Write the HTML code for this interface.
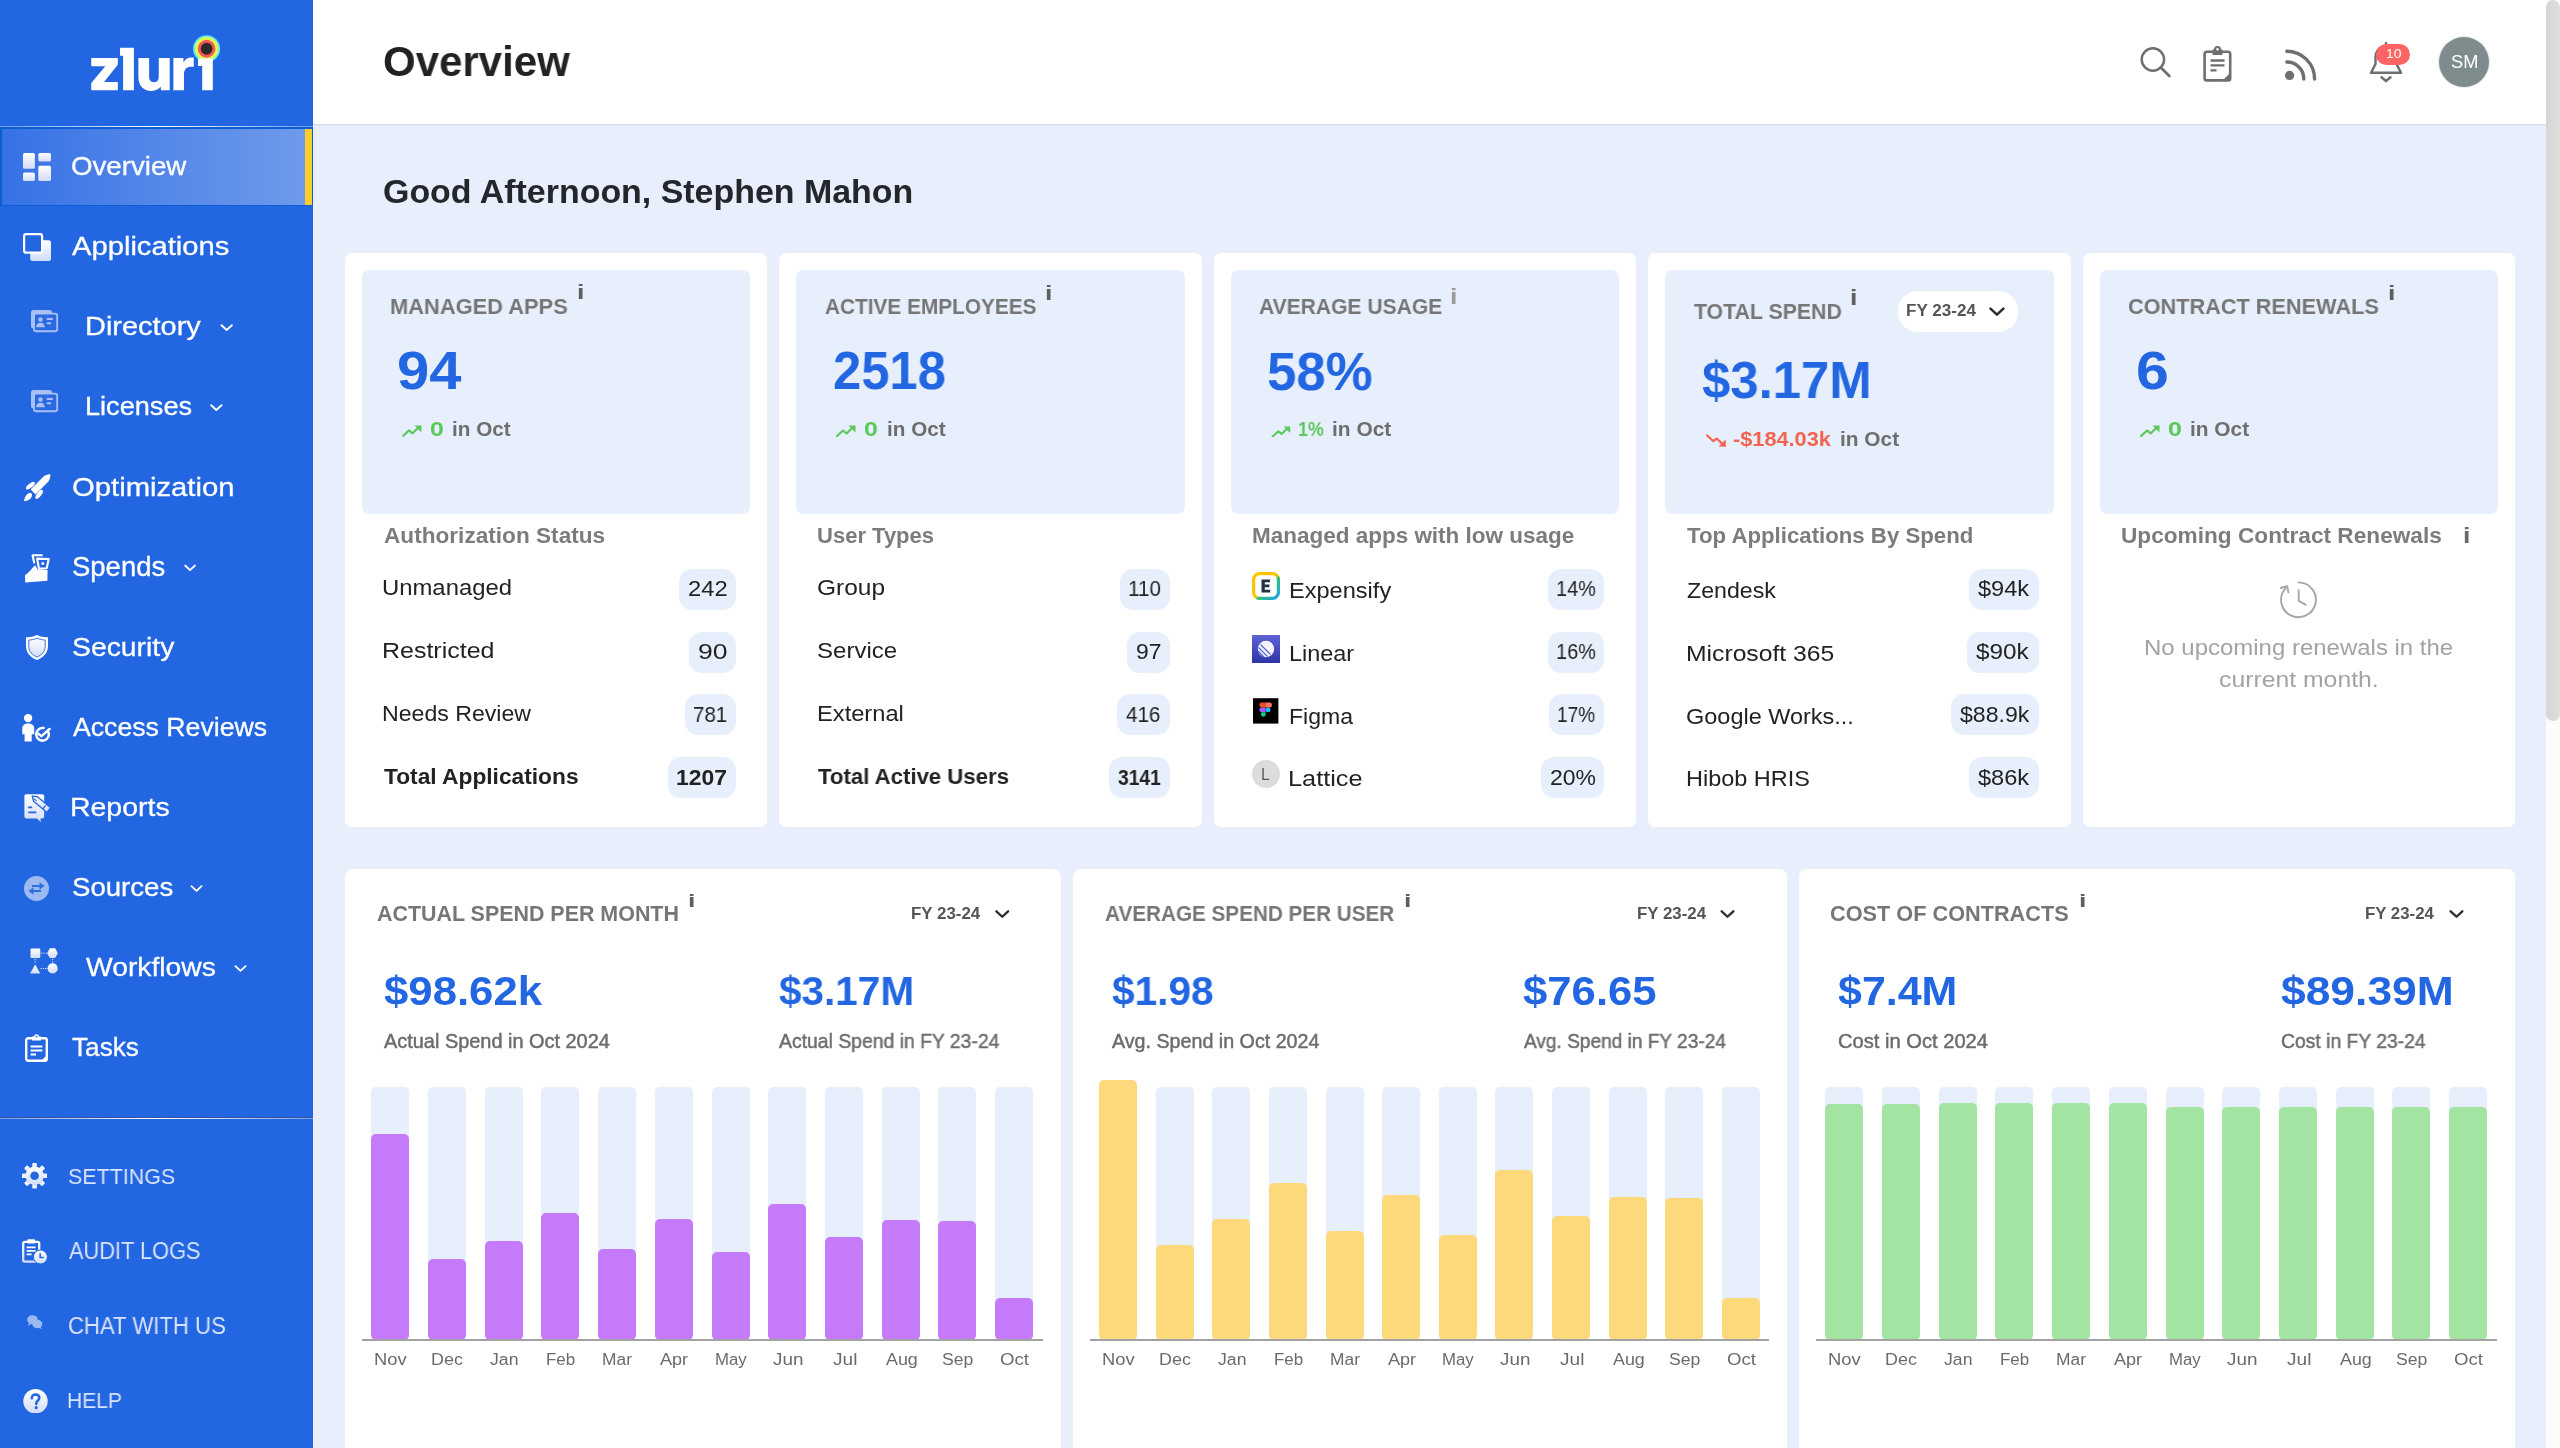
<!DOCTYPE html>
<html><head><meta charset="utf-8"><title>Overview</title>
<style>
*{box-sizing:border-box}
html,body{margin:0;padding:0}
body{width:2560px;height:1448px;overflow:hidden;position:relative;background:#E8EEFB;font-family:"Liberation Sans",sans-serif}
.t{position:absolute;white-space:nowrap;font-family:"Liberation Sans",sans-serif;will-change:transform}
.a{position:absolute}
</style></head><body>
<div class="a" style="left:0;top:0;width:313px;height:1448px;background:#2266E2"></div>
<div class="a" style="left:313px;top:0;width:2233px;height:124px;background:#fff"></div>
<div class="a" style="left:313px;top:124px;width:2233px;height:1px;background:#d9dde5"></div>
<div class="a" style="left:313px;top:125px;width:2233px;height:1px;background:#e0e6f3"></div>
<div class="a" style="left:2546px;top:0;width:14px;height:1448px;background:#fcfcfc"></div>
<div class="a" style="left:2546px;top:0px;width:14px;height:721px;background:linear-gradient(90deg,#d6d6d6,#dedede);border-radius:7px"></div>
<div class="a" style="left:0;top:126px;width:313px;height:1px;background:linear-gradient(90deg,#6f9bee,#ffffff 50%,#6f9bee)"></div>
<div class="a" style="left:0;top:1117px;width:313px;height:1px;background:#34539a"></div>
<div class="a" style="left:0;top:1118px;width:313px;height:1px;background:linear-gradient(90deg,#7aa2ee,#ffffff 50%,#7aa2ee)"></div>
<div class="a" style="left:0;top:127px;width:313px;height:79px;background:#0b5fd2"></div>
<div class="a" style="left:2px;top:129px;width:303px;height:76px;background:linear-gradient(90deg,#3672e6,#6f9aeb)"></div>
<div class="a" style="left:305px;top:129px;width:7px;height:76px;background:#fccc2a"></div>
<div class="a" style="left:345.0px;top:253px;width:422.0px;height:574px;background:#fff;border-radius:7px"></div>
<div class="a" style="left:362.0px;top:270px;width:388.0px;height:244px;background:#E8EFFC;border-radius:7px"></div>
<div class="a" style="left:779.0px;top:253px;width:422.6px;height:574px;background:#fff;border-radius:7px"></div>
<div class="a" style="left:796.0px;top:270px;width:388.6px;height:244px;background:#E8EFFC;border-radius:7px"></div>
<div class="a" style="left:1214.0px;top:253px;width:422.0px;height:574px;background:#fff;border-radius:7px"></div>
<div class="a" style="left:1231.0px;top:270px;width:388.0px;height:244px;background:#E8EFFC;border-radius:7px"></div>
<div class="a" style="left:1648.0px;top:253px;width:422.5px;height:574px;background:#fff;border-radius:7px"></div>
<div class="a" style="left:1665.0px;top:270px;width:388.5px;height:244px;background:#E8EFFC;border-radius:7px"></div>
<div class="a" style="left:2083.0px;top:253px;width:431.7px;height:574px;background:#fff;border-radius:7px"></div>
<div class="a" style="left:2100.0px;top:270px;width:397.7px;height:244px;background:#E8EFFC;border-radius:7px"></div>
<div class="a" style="left:345.0px;top:869px;width:716.0px;height:700px;background:#fff;border-radius:8px"></div>
<div class="a" style="left:1073.0px;top:869px;width:714.0px;height:700px;background:#fff;border-radius:8px"></div>
<div class="a" style="left:1799.0px;top:869px;width:715.7px;height:700px;background:#fff;border-radius:8px"></div>
<svg class="a" style="left:401.9px;top:425.0px" width="20.1" height="11.8" viewBox="0 0 20 12"><path d="M1 11 L7 5.5 L10.5 8.5 L16.5 2.5" fill="none" stroke="#5bc85b" stroke-width="2.2" stroke-linecap="round" stroke-linejoin="round"/><path d="M12.5 0.6 L19.6 0.4 L19.4 7.5 Z" fill="#5bc85b"/></svg>
<svg class="a" style="left:836.4px;top:424.7px" width="20.1" height="12.0" viewBox="0 0 20 12"><path d="M1 11 L7 5.5 L10.5 8.5 L16.5 2.5" fill="none" stroke="#5bc85b" stroke-width="2.2" stroke-linecap="round" stroke-linejoin="round"/><path d="M12.5 0.6 L19.6 0.4 L19.4 7.5 Z" fill="#5bc85b"/></svg>
<svg class="a" style="left:1270.6px;top:425.5px" width="20.4" height="11.4" viewBox="0 0 20 12"><path d="M1 11 L7 5.5 L10.5 8.5 L16.5 2.5" fill="none" stroke="#5bc85b" stroke-width="2.2" stroke-linecap="round" stroke-linejoin="round"/><path d="M12.5 0.6 L19.6 0.4 L19.4 7.5 Z" fill="#5bc85b"/></svg>
<svg class="a" style="left:2139.8px;top:425.0px" width="20.2" height="11.9" viewBox="0 0 20 12"><path d="M1 11 L7 5.5 L10.5 8.5 L16.5 2.5" fill="none" stroke="#5bc85b" stroke-width="2.2" stroke-linecap="round" stroke-linejoin="round"/><path d="M12.5 0.6 L19.6 0.4 L19.4 7.5 Z" fill="#5bc85b"/></svg>
<svg class="a" style="left:1705.6px;top:433.7px" width="20.4" height="13.1" viewBox="0 0 20 13"><path d="M1 1.5 L7 7 L10.5 4.5 L16.5 10" fill="none" stroke="#f2644f" stroke-width="2.2" stroke-linecap="round" stroke-linejoin="round"/><path d="M12.5 12.4 L19.6 12.6 L19.4 5.5 Z" fill="#f2644f"/></svg>
<div class="a" style="left:1898px;top:291px;width:120.3px;height:40.7px;background:#fff;border-radius:20px"></div>
<svg class="a" style="left:1989.4px;top:306.9px;overflow:visible" width="15.9" height="9.3" viewBox="0 0 16 9"><path d="M1.5 1.5 L8 7.5 L14.5 1.5" fill="none" stroke="#2d2d2d" stroke-width="2.6" stroke-linecap="round" stroke-linejoin="round"/></svg>
<svg class="a" style="left:994.8px;top:909.7px;overflow:visible" width="14.5" height="8.1" viewBox="0 0 16 9"><path d="M1.5 1.5 L8 7.5 L14.5 1.5" fill="none" stroke="#2d2d2d" stroke-width="2.6" stroke-linecap="round" stroke-linejoin="round"/></svg>
<svg class="a" style="left:1719.9px;top:909.7px;overflow:visible" width="15.0" height="8.1" viewBox="0 0 16 9"><path d="M1.5 1.5 L8 7.5 L14.5 1.5" fill="none" stroke="#2d2d2d" stroke-width="2.6" stroke-linecap="round" stroke-linejoin="round"/></svg>
<svg class="a" style="left:2448.5px;top:909.7px;overflow:visible" width="15.0" height="8.1" viewBox="0 0 16 9"><path d="M1.5 1.5 L8 7.5 L14.5 1.5" fill="none" stroke="#2d2d2d" stroke-width="2.6" stroke-linecap="round" stroke-linejoin="round"/></svg>
<div class="a" style="left:679.4px;top:568.8px;width:56.3px;height:41px;background:#E8EFFC;border-radius:13px"></div>
<div class="a" style="left:689.2px;top:631.6px;width:46.5px;height:41px;background:#E8EFFC;border-radius:13px"></div>
<div class="a" style="left:684.5px;top:694.4px;width:51.2px;height:41px;background:#E8EFFC;border-radius:13px"></div>
<div class="a" style="left:668.0px;top:757.2px;width:67.7px;height:41px;background:#E8EFFC;border-radius:13px"></div>
<div class="a" style="left:1119.9px;top:568.8px;width:49.7px;height:41px;background:#E8EFFC;border-radius:13px"></div>
<div class="a" style="left:1127.1px;top:631.6px;width:42.5px;height:41px;background:#E8EFFC;border-radius:13px"></div>
<div class="a" style="left:1117.4px;top:694.4px;width:52.2px;height:41px;background:#E8EFFC;border-radius:13px"></div>
<div class="a" style="left:1108.7px;top:757.2px;width:60.9px;height:41px;background:#E8EFFC;border-radius:13px"></div>
<div class="a" style="left:1547.5px;top:568.8px;width:56.9px;height:41px;background:#E8EFFC;border-radius:13px"></div>
<div class="a" style="left:1547.5px;top:631.6px;width:56.9px;height:41px;background:#E8EFFC;border-radius:13px"></div>
<div class="a" style="left:1549.2px;top:694.4px;width:55.2px;height:41px;background:#E8EFFC;border-radius:13px"></div>
<div class="a" style="left:1541.2px;top:757.2px;width:63.2px;height:41px;background:#E8EFFC;border-radius:13px"></div>
<div class="a" style="left:1968.7px;top:568.8px;width:70.1px;height:41px;background:#E8EFFC;border-radius:13px"></div>
<div class="a" style="left:1967.1px;top:631.6px;width:71.7px;height:41px;background:#E8EFFC;border-radius:13px"></div>
<div class="a" style="left:1950.5px;top:694.4px;width:88.3px;height:41px;background:#E8EFFC;border-radius:13px"></div>
<div class="a" style="left:1968.7px;top:757.2px;width:70.1px;height:41px;background:#E8EFFC;border-radius:13px"></div>
<svg class="a" style="left:1252.2px;top:572px" width="28" height="28" viewBox="0 0 28 28"><defs><linearGradient id="ex1" x1="0" y1="0" x2="1" y2="1"><stop offset="0" stop-color="#ffc400"/><stop offset="0.55" stop-color="#ffc400"/><stop offset="0.56" stop-color="#36c46d"/><stop offset="1" stop-color="#1aa3ea"/></linearGradient></defs><rect x="1.6" y="1.6" width="24.8" height="24.8" rx="6" fill="#fff" stroke="url(#ex1)" stroke-width="3.2"/><path d="M9.5 7.5 H18 V10.3 H12.8 V12.6 H17.4 V15.2 H12.8 V17.7 H18.2 V20.5 H9.5 Z" fill="#1f3440"/></svg>
<svg class="a" style="left:1252.2px;top:635px" width="28" height="28" viewBox="0 0 28 28"><defs><linearGradient id="ln1" x1="0" y1="0" x2="0" y2="1"><stop offset="0" stop-color="#5f63d4"/><stop offset="1" stop-color="#2d35a8"/></linearGradient></defs><rect x="0" y="0" width="28" height="28" fill="url(#ln1)"/><circle cx="14" cy="14" r="8.2" fill="#f4f4ff"/><path d="M6.5 12.5 L15.5 21.5 M6 16 L12 22 M8.5 9.5 L18.5 19.5" stroke="#5a5fcf" stroke-width="1.1"/></svg>
<svg class="a" style="left:1253.3px;top:698.4px" width="25.4" height="25.8" viewBox="0 0 26 26"><rect width="26" height="26" fill="#000"/><path d="M9 4.5 h4 v5 h-4 a2.5 2.5 0 0 1 0 -5z" fill="#f24e1e"/><path d="M13 4.5 h4 a2.5 2.5 0 0 1 0 5 h-4z" fill="#ff7262"/><path d="M9 9.5 h4 v5 h-4 a2.5 2.5 0 0 1 0 -5z" fill="#a259ff"/><circle cx="15.5" cy="12" r="2.5" fill="#1abcfe"/><path d="M9 14.5 h4 v2.5 a2.5 2.5 0 1 1 -4 -2.5z" fill="#0acf83"/></svg>
<div class="a" style="left:1252.2px;top:760px;width:28px;height:28px;border-radius:50%;background:#dcdcdc"></div>
<svg class="a" style="left:2278px;top:579px" width="42" height="42" viewBox="0 0 42 42"><path d="M20.5 3.4 A17.4 17.4 0 1 1 7.6 9.1" fill="none" stroke="#a6a6a6" stroke-width="1.9" stroke-linecap="round"/><path d="M2.9 9 L9.1 7.2 L10.4 13.4" fill="none" stroke="#a6a6a6" stroke-width="1.9" stroke-linecap="round" stroke-linejoin="round"/><path d="M20.7 11.3 V21.9 L27.8 25.8" fill="none" stroke="#a6a6a6" stroke-width="1.9" stroke-linecap="round" stroke-linejoin="round"/></svg>
<div class="a" style="left:371.2px;top:1087.4px;width:38px;height:252.6px;background:#E8EFFC;border-radius:5px"></div>
<div class="a" style="left:371.2px;top:1133.6px;width:38px;height:206.4px;background:#c47af9;border-radius:5px"></div>
<div class="a" style="left:427.9px;top:1087.4px;width:38px;height:252.6px;background:#E8EFFC;border-radius:5px"></div>
<div class="a" style="left:427.9px;top:1259.4px;width:38px;height:80.6px;background:#c47af9;border-radius:5px"></div>
<div class="a" style="left:484.6px;top:1087.4px;width:38px;height:252.6px;background:#E8EFFC;border-radius:5px"></div>
<div class="a" style="left:484.6px;top:1240.6px;width:38px;height:99.4px;background:#c47af9;border-radius:5px"></div>
<div class="a" style="left:541.4px;top:1087.4px;width:38px;height:252.6px;background:#E8EFFC;border-radius:5px"></div>
<div class="a" style="left:541.4px;top:1212.5px;width:38px;height:127.5px;background:#c47af9;border-radius:5px"></div>
<div class="a" style="left:598.1px;top:1087.4px;width:38px;height:252.6px;background:#E8EFFC;border-radius:5px"></div>
<div class="a" style="left:598.1px;top:1249.2px;width:38px;height:90.8px;background:#c47af9;border-radius:5px"></div>
<div class="a" style="left:654.8px;top:1087.4px;width:38px;height:252.6px;background:#E8EFFC;border-radius:5px"></div>
<div class="a" style="left:654.8px;top:1218.9px;width:38px;height:121.1px;background:#c47af9;border-radius:5px"></div>
<div class="a" style="left:711.5px;top:1087.4px;width:38px;height:252.6px;background:#E8EFFC;border-radius:5px"></div>
<div class="a" style="left:711.5px;top:1251.5px;width:38px;height:88.5px;background:#c47af9;border-radius:5px"></div>
<div class="a" style="left:768.2px;top:1087.4px;width:38px;height:252.6px;background:#E8EFFC;border-radius:5px"></div>
<div class="a" style="left:768.2px;top:1204.4px;width:38px;height:135.6px;background:#c47af9;border-radius:5px"></div>
<div class="a" style="left:824.9px;top:1087.4px;width:38px;height:252.6px;background:#E8EFFC;border-radius:5px"></div>
<div class="a" style="left:824.9px;top:1237.1px;width:38px;height:102.9px;background:#c47af9;border-radius:5px"></div>
<div class="a" style="left:881.7px;top:1087.4px;width:38px;height:252.6px;background:#E8EFFC;border-radius:5px"></div>
<div class="a" style="left:881.7px;top:1220.3px;width:38px;height:119.7px;background:#c47af9;border-radius:5px"></div>
<div class="a" style="left:938.4px;top:1087.4px;width:38px;height:252.6px;background:#E8EFFC;border-radius:5px"></div>
<div class="a" style="left:938.4px;top:1220.9px;width:38px;height:119.1px;background:#c47af9;border-radius:5px"></div>
<div class="a" style="left:995.1px;top:1087.4px;width:38px;height:252.6px;background:#E8EFFC;border-radius:5px"></div>
<div class="a" style="left:995.1px;top:1298.4px;width:38px;height:41.6px;background:#c47af9;border-radius:5px"></div>
<div class="a" style="left:362.3px;top:1339px;width:680.8px;height:2px;background:#a2a2a2"></div>
<div class="a" style="left:1099.0px;top:1087.4px;width:38px;height:252.6px;background:#E8EFFC;border-radius:5px"></div>
<div class="a" style="left:1099.0px;top:1079.8px;width:38px;height:260.2px;background:#fcda7b;border-radius:5px"></div>
<div class="a" style="left:1155.6px;top:1087.4px;width:38px;height:252.6px;background:#E8EFFC;border-radius:5px"></div>
<div class="a" style="left:1155.6px;top:1244.9px;width:38px;height:95.1px;background:#fcda7b;border-radius:5px"></div>
<div class="a" style="left:1212.3px;top:1087.4px;width:38px;height:252.6px;background:#E8EFFC;border-radius:5px"></div>
<div class="a" style="left:1212.3px;top:1218.5px;width:38px;height:121.5px;background:#fcda7b;border-radius:5px"></div>
<div class="a" style="left:1268.9px;top:1087.4px;width:38px;height:252.6px;background:#E8EFFC;border-radius:5px"></div>
<div class="a" style="left:1268.9px;top:1183.0px;width:38px;height:157.0px;background:#fcda7b;border-radius:5px"></div>
<div class="a" style="left:1325.5px;top:1087.4px;width:38px;height:252.6px;background:#E8EFFC;border-radius:5px"></div>
<div class="a" style="left:1325.5px;top:1230.9px;width:38px;height:109.1px;background:#fcda7b;border-radius:5px"></div>
<div class="a" style="left:1382.1px;top:1087.4px;width:38px;height:252.6px;background:#E8EFFC;border-radius:5px"></div>
<div class="a" style="left:1382.1px;top:1195.1px;width:38px;height:144.9px;background:#fcda7b;border-radius:5px"></div>
<div class="a" style="left:1438.8px;top:1087.4px;width:38px;height:252.6px;background:#E8EFFC;border-radius:5px"></div>
<div class="a" style="left:1438.8px;top:1235.4px;width:38px;height:104.6px;background:#fcda7b;border-radius:5px"></div>
<div class="a" style="left:1495.4px;top:1087.4px;width:38px;height:252.6px;background:#E8EFFC;border-radius:5px"></div>
<div class="a" style="left:1495.4px;top:1170.4px;width:38px;height:169.6px;background:#fcda7b;border-radius:5px"></div>
<div class="a" style="left:1552.0px;top:1087.4px;width:38px;height:252.6px;background:#E8EFFC;border-radius:5px"></div>
<div class="a" style="left:1552.0px;top:1215.7px;width:38px;height:124.3px;background:#fcda7b;border-radius:5px"></div>
<div class="a" style="left:1608.6px;top:1087.4px;width:38px;height:252.6px;background:#E8EFFC;border-radius:5px"></div>
<div class="a" style="left:1608.6px;top:1197.1px;width:38px;height:142.9px;background:#fcda7b;border-radius:5px"></div>
<div class="a" style="left:1665.3px;top:1087.4px;width:38px;height:252.6px;background:#E8EFFC;border-radius:5px"></div>
<div class="a" style="left:1665.3px;top:1198.0px;width:38px;height:142.0px;background:#fcda7b;border-radius:5px"></div>
<div class="a" style="left:1721.9px;top:1087.4px;width:38px;height:252.6px;background:#E8EFFC;border-radius:5px"></div>
<div class="a" style="left:1721.9px;top:1298.4px;width:38px;height:41.6px;background:#fcda7b;border-radius:5px"></div>
<div class="a" style="left:1089.7px;top:1339px;width:679.7px;height:2px;background:#a2a2a2"></div>
<div class="a" style="left:1825.3px;top:1087.4px;width:38px;height:252.6px;background:#E8EFFC;border-radius:5px"></div>
<div class="a" style="left:1825.3px;top:1104.3px;width:38px;height:235.7px;background:#a3e4a3;border-radius:5px"></div>
<div class="a" style="left:1882.0px;top:1087.4px;width:38px;height:252.6px;background:#E8EFFC;border-radius:5px"></div>
<div class="a" style="left:1882.0px;top:1104.3px;width:38px;height:235.7px;background:#a3e4a3;border-radius:5px"></div>
<div class="a" style="left:1938.7px;top:1087.4px;width:38px;height:252.6px;background:#E8EFFC;border-radius:5px"></div>
<div class="a" style="left:1938.7px;top:1103.2px;width:38px;height:236.8px;background:#a3e4a3;border-radius:5px"></div>
<div class="a" style="left:1995.4px;top:1087.4px;width:38px;height:252.6px;background:#E8EFFC;border-radius:5px"></div>
<div class="a" style="left:1995.4px;top:1103.2px;width:38px;height:236.8px;background:#a3e4a3;border-radius:5px"></div>
<div class="a" style="left:2052.1px;top:1087.4px;width:38px;height:252.6px;background:#E8EFFC;border-radius:5px"></div>
<div class="a" style="left:2052.1px;top:1103.2px;width:38px;height:236.8px;background:#a3e4a3;border-radius:5px"></div>
<div class="a" style="left:2108.8px;top:1087.4px;width:38px;height:252.6px;background:#E8EFFC;border-radius:5px"></div>
<div class="a" style="left:2108.8px;top:1103.2px;width:38px;height:236.8px;background:#a3e4a3;border-radius:5px"></div>
<div class="a" style="left:2165.5px;top:1087.4px;width:38px;height:252.6px;background:#E8EFFC;border-radius:5px"></div>
<div class="a" style="left:2165.5px;top:1106.6px;width:38px;height:233.4px;background:#a3e4a3;border-radius:5px"></div>
<div class="a" style="left:2222.2px;top:1087.4px;width:38px;height:252.6px;background:#E8EFFC;border-radius:5px"></div>
<div class="a" style="left:2222.2px;top:1106.6px;width:38px;height:233.4px;background:#a3e4a3;border-radius:5px"></div>
<div class="a" style="left:2278.9px;top:1087.4px;width:38px;height:252.6px;background:#E8EFFC;border-radius:5px"></div>
<div class="a" style="left:2278.9px;top:1106.6px;width:38px;height:233.4px;background:#a3e4a3;border-radius:5px"></div>
<div class="a" style="left:2335.6px;top:1087.4px;width:38px;height:252.6px;background:#E8EFFC;border-radius:5px"></div>
<div class="a" style="left:2335.6px;top:1106.8px;width:38px;height:233.2px;background:#a3e4a3;border-radius:5px"></div>
<div class="a" style="left:2392.3px;top:1087.4px;width:38px;height:252.6px;background:#E8EFFC;border-radius:5px"></div>
<div class="a" style="left:2392.3px;top:1106.8px;width:38px;height:233.2px;background:#a3e4a3;border-radius:5px"></div>
<div class="a" style="left:2449.0px;top:1087.4px;width:38px;height:252.6px;background:#E8EFFC;border-radius:5px"></div>
<div class="a" style="left:2449.0px;top:1106.8px;width:38px;height:233.2px;background:#a3e4a3;border-radius:5px"></div>
<div class="a" style="left:1816.3px;top:1339px;width:680.6px;height:2px;background:#a2a2a2"></div>
<svg class="a" style="left:0;top:0" width="313" height="124" viewBox="0 0 313 124"><circle cx="206.6" cy="48.75" r="13.6" fill="#5fe3ff"/><circle cx="206.6" cy="48.75" r="11.9" fill="#d6ff4f"/><circle cx="206.6" cy="48.75" r="8.9" fill="#ff5757"/><circle cx="206.6" cy="48.75" r="5.9" fill="#2d2a2a"/><g fill="#fff"><path d="M91.25 58.1 H117.8 V64.7 L104 81.9 H117.8 V90.3 H91.25 V83.1 L105.3 66.2 H91.25 Z"/><path d="M120 47.8 H133.9 V90.3 H123.1 V55.8 H120 Z"/><path d="M138.4 58.1 H149.1 V76.5 C149.1 80.5 150.8 82.2 154 82.2 C157.2 82.2 158.75 80.5 158.75 76.5 V58.1 H169.7 V90.3 H161 L160.7 86.8 C158.6 89.6 155.4 90.9 151.6 90.9 C143.3 90.9 138.4 85.5 138.4 77 Z"/><path d="M173.4 58.1 H183.3 L183.6 62.6 C185 59.3 187.8 57.6 191.6 57.6 H193.75 V66.8 H191.3 C186.6 66.8 184 69.2 184 74.5 V90.3 H173.4 Z"/><path d="M198 58.4 H212.8 V90.3 H202.2 V66 H198 Z"/></g></svg>
<svg class="a" style="left:22.8px;top:153.0px;opacity:1.00" width="28.0" height="28.0" viewBox="0 0 28 28"><defs><linearGradient id="wg" x1="0" y1="0" x2="0" y2="1"><stop offset="0" stop-color="#ffffff"/><stop offset="1" stop-color="#d3dcf8"/></linearGradient></defs><g fill="url(#wg)"><rect x="0" y="0" width="11.9" height="15.8" rx="1.6"/><rect x="15.3" y="0" width="12.7" height="8.6" rx="1.6"/><rect x="0" y="19.5" width="11.9" height="8.5" rx="1.6"/><rect x="15.3" y="12.7" width="12.7" height="15.3" rx="1.6"/></g></svg>
<svg class="a" style="left:22.8px;top:233.0px;opacity:1.00" width="28.0" height="28.0" viewBox="0 0 28 28"><defs><linearGradient id="wg" x1="0" y1="0" x2="0" y2="1"><stop offset="0" stop-color="#ffffff"/><stop offset="1" stop-color="#d3dcf8"/></linearGradient></defs><rect x="7.2" y="7.3" width="20.8" height="20.7" rx="2.5" fill="url(#wg)"/><rect x="1.1" y="1.1" width="18" height="18.6" rx="2" fill="#2266E2" stroke="#fff" stroke-width="2.2"/></svg>
<svg class="a" style="left:29.5px;top:309.0px;opacity:1.00" width="29.0" height="24.0" viewBox="0 0 29 24"><defs><linearGradient id="wg" x1="0" y1="0" x2="0" y2="1"><stop offset="0" stop-color="#ffffff"/><stop offset="1" stop-color="#d3dcf8"/></linearGradient></defs><rect x="1" y="1" width="21" height="18.5" rx="2.5" fill="#a8c0f5"/><rect x="4" y="4.6" width="23.2" height="17.6" rx="2.2" fill="#2a6ae2" stroke="#a8c0f5" stroke-width="1.9"/><circle cx="10.5" cy="10.5" r="2.3" fill="#a8c0f5"/><path d="M6.2 18.3 C6.6 14.8 8.2 13.8 10.5 13.8 C12.8 13.8 14.4 14.8 14.8 18.3 Z" fill="#a8c0f5"/><rect x="16.5" y="9.1" width="6.5" height="1.9" rx="0.9" fill="#a8c0f5"/><rect x="16.5" y="13.3" width="4.8" height="1.9" rx="0.9" fill="#a8c0f5"/></svg>
<svg class="a" style="left:29.5px;top:389.3px;opacity:1.00" width="29.0" height="24.0" viewBox="0 0 29 24"><defs><linearGradient id="wg" x1="0" y1="0" x2="0" y2="1"><stop offset="0" stop-color="#ffffff"/><stop offset="1" stop-color="#d3dcf8"/></linearGradient></defs><rect x="1" y="1" width="21" height="18.5" rx="2.5" fill="#a8c0f5"/><rect x="4" y="4.6" width="23.2" height="17.6" rx="2.2" fill="#2a6ae2" stroke="#a8c0f5" stroke-width="1.9"/><circle cx="10.5" cy="10.5" r="2.3" fill="#a8c0f5"/><path d="M6.2 18.3 C6.6 14.8 8.2 13.8 10.5 13.8 C12.8 13.8 14.4 14.8 14.8 18.3 Z" fill="#a8c0f5"/><rect x="16.5" y="9.1" width="6.5" height="1.9" rx="0.9" fill="#a8c0f5"/><rect x="16.5" y="13.3" width="4.8" height="1.9" rx="0.9" fill="#a8c0f5"/></svg>
<svg class="a" style="left:22.5px;top:473.5px;opacity:1.00" width="28.0" height="28.0" viewBox="0 0 28 28"><defs><linearGradient id="wg" x1="0" y1="0" x2="0" y2="1"><stop offset="0" stop-color="#ffffff"/><stop offset="1" stop-color="#d3dcf8"/></linearGradient></defs><g fill="#fff"><path d="M7.6 15.4 L20.8 2.2 C23.5 0.6 26.2 0.2 27.4 0.4 C27.6 1.8 27.2 4.4 25.6 7.2 L12.6 20.4 Z"/><ellipse cx="7.4" cy="11.6" rx="5.4" ry="2.1" transform="rotate(-38 7.4 11.6)"/><ellipse cx="16.2" cy="20.4" rx="5.4" ry="2.1" transform="rotate(-52 16.2 20.4)"/><path d="M8.6 19.4 C6 18.2 2.2 20 1 27.2 C7.8 26.4 9.8 22.4 8.6 19.4 Z"/></g></svg>
<svg class="a" style="left:23.5px;top:553.5px;opacity:1.00" width="26.0" height="29.0" viewBox="0 0 26 29"><defs><linearGradient id="wg" x1="0" y1="0" x2="0" y2="1"><stop offset="0" stop-color="#ffffff"/><stop offset="1" stop-color="#d3dcf8"/></linearGradient></defs><g fill="none" stroke="#fff" stroke-width="2.1" stroke-linejoin="round"><path d="M18.7 1.3 H8.6 L10.3 9.4"/><path d="M13.1 4.6 L24.7 5 L22.7 14.2 L15 14.6 Z"/></g><circle cx="18.8" cy="9.6" r="1.5" fill="#fff"/><path d="M1 21 C3.6 19.6 6.2 17.2 8.6 13.8 L11.2 11.2 L13.6 15.6 L23.6 16 L23.4 26.8 L1.2 28.4 Z" fill="#fff"/></svg>
<svg class="a" style="left:24.5px;top:634.0px;opacity:1.00" width="24.0" height="27.0" viewBox="0 0 24 27"><defs><linearGradient id="wg" x1="0" y1="0" x2="0" y2="1"><stop offset="0" stop-color="#ffffff"/><stop offset="1" stop-color="#d3dcf8"/></linearGradient></defs><path d="M12 1 C16 2.8 19.5 3.4 23 3.2 V12 C23 19 18.5 23.5 12 26 C5.5 23.5 1 19 1 12 V3.2 C4.5 3.4 8 2.8 12 1 Z" fill="#fff"/><path d="M12 4.2 C15 5.5 17.6 6 20.2 6 V12.3 C20.2 17.5 17 21 12 23 C7 21 3.8 17.5 3.8 12.3 V6 C6.4 6 9 5.5 12 4.2 Z" fill="url(#wg)" stroke="#2266E2" stroke-width="0.9"/></svg>
<svg class="a" style="left:22.4px;top:714.3px;opacity:1.00" width="29.0" height="28.0" viewBox="0 0 29 28"><defs><linearGradient id="wg" x1="0" y1="0" x2="0" y2="1"><stop offset="0" stop-color="#ffffff"/><stop offset="1" stop-color="#d3dcf8"/></linearGradient></defs><g fill="#fff"><circle cx="6.1" cy="4.1" r="4.2"/><path d="M0.3 14.2 C0.3 11.2 2.6 9.4 6.2 9.4 C9.8 9.4 12.2 11.2 12.2 14.2 V20.3 H9.7 V27.5 H2.6 V20.3 H0.3 Z"/></g><path d="M25.9 17.1 A6.3 6.3 0 1 1 21.6 14.1" fill="none" stroke="#fff" stroke-width="2.5" stroke-linecap="round"/><path d="M16 19.4 L19.5 22.2 L27.6 14.9" fill="none" stroke="#fff" stroke-width="2.4" stroke-linecap="round" stroke-linejoin="round"/></svg>
<svg class="a" style="left:24.0px;top:793.5px;opacity:1.00" width="27.0" height="29.0" viewBox="0 0 27 29"><defs><linearGradient id="wg" x1="0" y1="0" x2="0" y2="1"><stop offset="0" stop-color="#ffffff"/><stop offset="1" stop-color="#d3dcf8"/></linearGradient></defs><path d="M2.4 0.3 H18.2 C19.4 0.3 20.2 1.1 20.2 2.3 V22.6 C20.2 23.8 19.4 24.6 18.2 24.6 H16.4 L17 28.2 L13 24.6 H2.4 C1.2 24.6 0.4 23.8 0.4 22.6 V2.3 C0.4 1.1 1.2 0.3 2.4 0.3 Z" fill="url(#wg)"/><path d="M4.2 13.3 H8.2 M4.2 18.3 H12.4" stroke="#2266E2" stroke-width="1.7"/><path d="M8.2 2.2 L13.4 2.7 L26.6 13.7 L22.8 18.3 L9.6 7.3 Z" fill="url(#wg)" stroke="#2266E2" stroke-width="1.3" stroke-linejoin="round"/><path d="M9.8 4.6 L12.6 6.9" stroke="#2266E2" stroke-width="1.1"/><path d="M21.6 11.4 L18.8 15" stroke="#2266E2" stroke-width="1.3"/></svg>
<svg class="a" style="left:24.0px;top:876.0px;opacity:1.00" width="25.0" height="25.0" viewBox="0 0 25 25"><defs><linearGradient id="wg" x1="0" y1="0" x2="0" y2="1"><stop offset="0" stop-color="#ffffff"/><stop offset="1" stop-color="#d3dcf8"/></linearGradient></defs><circle cx="12.5" cy="12.5" r="12.5" fill="#fff" opacity="0.55"/><g fill="#2f6fe3"><path d="M8 9 H15.5 V6.3 L20.5 10 L15.5 13.7 V11 H8 Z"/><path d="M17 14 H9.5 V11.3 L4.5 15 L9.5 18.7 V16 H17 Z"/></g></svg>
<svg class="a" style="left:29.7px;top:948.0px;opacity:1.00" width="28.0" height="26.0" viewBox="0 0 28 26"><defs><linearGradient id="wg" x1="0" y1="0" x2="0" y2="1"><stop offset="0" stop-color="#ffffff"/><stop offset="1" stop-color="#d3dcf8"/></linearGradient></defs><g fill="url(#wg)"><rect x="0.5" y="0.5" width="9.8" height="9.6" rx="1"/><path d="M19.8 0.3 H25.2 L27.8 5.2 L25.2 10.1 H19.8 L17.2 5.2 Z"/><path d="M5.2 16.4 L10.3 25.4 H0 Z"/><circle cx="22.6" cy="20.4" r="5.1"/></g><g stroke="#e8eefc" stroke-width="1" stroke-dasharray="1.2 1.2"><path d="M11.2 5.2 H17"/><path d="M10.5 20.5 H17"/><path d="M5.2 11 V15.5"/><path d="M22.6 11 V15"/></g></svg>
<svg class="a" style="left:25.2px;top:1034.4px;opacity:1.00" width="23.0" height="28.0" viewBox="0 0 23 28"><defs><linearGradient id="wg" x1="0" y1="0" x2="0" y2="1"><stop offset="0" stop-color="#ffffff"/><stop offset="1" stop-color="#d3dcf8"/></linearGradient></defs><rect x="1.2" y="4.2" width="20.6" height="22.6" rx="2" fill="none" stroke="#fff" stroke-width="2.4"/><path d="M7 2.5 H16 V6.5 H7 Z" fill="#fff"/><circle cx="11.5" cy="2.6" r="2.4" fill="#fff"/><circle cx="11.5" cy="2.6" r="0.9" fill="#2266E2"/><path d="M5.6 12.5 H17.4 M5.6 16.5 H17.4 M5.6 20.5 H11" stroke="#fff" stroke-width="2"/><path d="M16 27 L22 21 V27 Z" fill="#fff"/></svg>
<svg class="a" style="left:22.3px;top:1163.2px;opacity:1.00" width="25.2" height="25.6" viewBox="0 0 25.2 25.6"><defs><linearGradient id="wg" x1="0" y1="0" x2="0" y2="1"><stop offset="0" stop-color="#ffffff"/><stop offset="1" stop-color="#d3dcf8"/></linearGradient></defs><g fill="url(#wg)"><rect x="10.3" y="0" width="4.6" height="6" rx="1.2" transform="rotate(0 12.6 12.8)"/><rect x="10.3" y="0" width="4.6" height="6" rx="1.2" transform="rotate(45 12.6 12.8)"/><rect x="10.3" y="0" width="4.6" height="6" rx="1.2" transform="rotate(90 12.6 12.8)"/><rect x="10.3" y="0" width="4.6" height="6" rx="1.2" transform="rotate(135 12.6 12.8)"/><rect x="10.3" y="0" width="4.6" height="6" rx="1.2" transform="rotate(180 12.6 12.8)"/><rect x="10.3" y="0" width="4.6" height="6" rx="1.2" transform="rotate(225 12.6 12.8)"/><rect x="10.3" y="0" width="4.6" height="6" rx="1.2" transform="rotate(270 12.6 12.8)"/><rect x="10.3" y="0" width="4.6" height="6" rx="1.2" transform="rotate(315 12.6 12.8)"/><circle cx="12.6" cy="12.8" r="9.2"/></g><circle cx="12.6" cy="12.8" r="4.3" fill="#2266E2"/></svg>
<svg class="a" style="left:22.3px;top:1238.8px;opacity:1.00" width="25.5" height="25.2" viewBox="0 0 25.5 25.2"><defs><linearGradient id="wg" x1="0" y1="0" x2="0" y2="1"><stop offset="0" stop-color="#ffffff"/><stop offset="1" stop-color="#d3dcf8"/></linearGradient></defs><rect x="1.2" y="2.8" width="16" height="19.8" rx="1.6" fill="none" stroke="url(#wg)" stroke-width="2.3"/><rect x="5.2" y="0.3" width="8" height="4.2" rx="1.2" fill="#fff"/><path d="M4.6 8.4 H13.6 M4.6 11.9 H13.6 M4.6 15.4 H9.5" stroke="#fff" stroke-width="1.9"/><circle cx="18.4" cy="18" r="7" fill="url(#wg)" stroke="#2266E2" stroke-width="1"/><path d="M18.2 14.2 V18.5 H21.8" fill="none" stroke="#2266E2" stroke-width="1.6"/></svg>
<svg class="a" style="left:27.2px;top:1314.8px;opacity:1.00" width="15.5" height="14.2" viewBox="0 0 15.5 14.2"><defs><linearGradient id="wg" x1="0" y1="0" x2="0" y2="1"><stop offset="0" stop-color="#ffffff"/><stop offset="1" stop-color="#d3dcf8"/></linearGradient></defs><g fill="#fff" opacity="0.55"><ellipse cx="5.5" cy="4.7" rx="5.3" ry="4.4"/><path d="M2 7.5 L1 11 L5 8.5 Z"/><ellipse cx="10.3" cy="9" rx="5" ry="4.2"/><path d="M13.5 11.5 L14.8 14 L11 12.5 Z"/></g></svg>
<svg class="a" style="left:22.5px;top:1388.8px;opacity:1.00" width="25.0" height="24.5" viewBox="0 0 25 24.5"><defs><linearGradient id="wg" x1="0" y1="0" x2="0" y2="1"><stop offset="0" stop-color="#ffffff"/><stop offset="1" stop-color="#d3dcf8"/></linearGradient></defs><circle cx="12.5" cy="12.25" r="12.2" fill="url(#wg)"/><path d="M8.8 9.2 C8.8 6.9 10.4 5.4 12.6 5.4 C14.8 5.4 16.3 6.8 16.3 8.8 C16.3 11.5 13.3 11.8 13.3 14.4 V15" fill="none" stroke="#2266E2" stroke-width="2.5" stroke-linecap="round"/><circle cx="13.2" cy="18.7" r="1.6" fill="#2266E2"/></svg>
<svg class="a" style="left:219.6px;top:324.0px;overflow:visible" width="13.4" height="7.2" viewBox="0 0 16 9"><path d="M1.5 1.5 L8 7.5 L14.5 1.5" fill="none" stroke="#ffffff" stroke-width="2.4" stroke-linecap="round" stroke-linejoin="round"/></svg>
<svg class="a" style="left:210.0px;top:404.0px;overflow:visible" width="12.7" height="7.2" viewBox="0 0 16 9"><path d="M1.5 1.5 L8 7.5 L14.5 1.5" fill="none" stroke="#ffffff" stroke-width="2.4" stroke-linecap="round" stroke-linejoin="round"/></svg>
<svg class="a" style="left:183.7px;top:564.0px;overflow:visible" width="12.1" height="7.6" viewBox="0 0 16 9"><path d="M1.5 1.5 L8 7.5 L14.5 1.5" fill="none" stroke="#ffffff" stroke-width="2.4" stroke-linecap="round" stroke-linejoin="round"/></svg>
<svg class="a" style="left:190.0px;top:884.5px;overflow:visible" width="13.0" height="7.0" viewBox="0 0 16 9"><path d="M1.5 1.5 L8 7.5 L14.5 1.5" fill="none" stroke="#ffffff" stroke-width="2.4" stroke-linecap="round" stroke-linejoin="round"/></svg>
<svg class="a" style="left:233.5px;top:964.5px;overflow:visible" width="13.0" height="7.0" viewBox="0 0 16 9"><path d="M1.5 1.5 L8 7.5 L14.5 1.5" fill="none" stroke="#ffffff" stroke-width="2.4" stroke-linecap="round" stroke-linejoin="round"/></svg>
<svg class="a" style="left:2138px;top:45px" width="36" height="36" viewBox="0 0 36 36"><circle cx="14.9" cy="14.5" r="11.2" fill="none" stroke="#6f6f6f" stroke-width="2.5"/><path d="M22.8 22.6 L31.3 31" stroke="#6f6f6f" stroke-width="2.8" stroke-linecap="round"/></svg>
<svg class="a" style="left:2202px;top:45px" width="31" height="38" viewBox="0 0 31 38"><rect x="2.6" y="6.8" width="25.6" height="28.6" rx="2.2" fill="none" stroke="#6f6f6f" stroke-width="2.6"/><path d="M10.5 4.5 H20.5 V10 H10.5 Z" fill="#6f6f6f"/><circle cx="15.5" cy="4.5" r="3.6" fill="#6f6f6f"/><circle cx="15.5" cy="4.2" r="1.2" fill="#fff"/><path d="M8.5 15.5 H22.5 M8.5 20.3 H22.5 M8.5 25.3 H14.5" stroke="#6f6f6f" stroke-width="2.3"/><path d="M20.5 35.5 L28.5 27.5 V35.5 Z" fill="#6f6f6f"/></svg>
<svg class="a" style="left:2282px;top:47px" width="37" height="36" viewBox="0 0 37 36"><circle cx="7.6" cy="28.4" r="4.6" fill="#6f6f6f"/><path d="M4.8 15 A17 17 0 0 1 21.8 32" fill="none" stroke="#6f6f6f" stroke-width="3.4" stroke-linecap="round"/><path d="M4.8 4.2 A27.8 27.8 0 0 1 32.6 32" fill="none" stroke="#6f6f6f" stroke-width="3.4" stroke-linecap="round"/></svg>
<svg class="a" style="left:2367px;top:40px" width="38" height="44" viewBox="0 0 38 44"><path d="M19 3 V6.2" stroke="#6f6f6f" stroke-width="2.4" stroke-linecap="round"/><path d="M19 6.2 C12.5 6.2 8.5 11 8.5 18 V24 L4 32.8 H34 L29.5 24 V18 C29.5 11 25.5 6.2 19 6.2 Z" fill="none" stroke="#6f6f6f" stroke-width="2.5" stroke-linejoin="round"/><path d="M14.5 37.3 L19 41 L23.5 37.3" fill="none" stroke="#6f6f6f" stroke-width="2.5" stroke-linecap="round" stroke-linejoin="round"/></svg>
<div class="a" style="left:2376px;top:43.5px;width:34.4px;height:21.2px;background:#ff6464;border-radius:11px"></div>
<div class="a" style="left:2439.4px;top:36.5px;width:50px;height:50px;border-radius:50%;background:#7f8c8d;box-shadow:0 0 0 1px #e6e9ea"></div>
<div class="t" style="left:382.82px;top:41.00px;font-size:42.29px;line-height:42px;font-weight:700;color:#222222;transform:scaleX(0.9927);transform-origin:0 0;">Overview</div>
<div class="t" style="left:382.84px;top:174.00px;font-size:33.71px;line-height:34px;font-weight:700;color:#23262b;transform:scaleX(1.0068);transform-origin:0 0;">Good Afternoon, Stephen Mahon</div>
<div class="t" style="left:71.39px;top:153.00px;font-size:25.57px;line-height:26px;font-weight:400;color:#ffffff;transform:scaleX(1.0828);transform-origin:0 0;-webkit-text-stroke:0.3px #fff;">Overview</div>
<div class="t" style="left:72.00px;top:233.00px;font-size:25.86px;line-height:26px;font-weight:400;color:#ffffff;transform:scaleX(1.1280);transform-origin:0 0;-webkit-text-stroke:0.3px #fff;">Applications</div>
<div class="t" style="left:85.18px;top:313.00px;font-size:25.71px;line-height:26px;font-weight:400;color:#ffffff;transform:scaleX(1.1259);transform-origin:0 0;-webkit-text-stroke:0.3px #fff;">Directory</div>
<div class="t" style="left:85.33px;top:393.00px;font-size:25.86px;line-height:26px;font-weight:400;color:#ffffff;transform:scaleX(1.0493);transform-origin:0 0;-webkit-text-stroke:0.3px #fff;">Licenses</div>
<div class="t" style="left:71.53px;top:474.00px;font-size:26.00px;line-height:26px;font-weight:400;color:#ffffff;transform:scaleX(1.1247);transform-origin:0 0;-webkit-text-stroke:0.3px #fff;">Optimization</div>
<div class="t" style="left:71.60px;top:554.00px;font-size:26.71px;line-height:27px;font-weight:400;color:#ffffff;transform:scaleX(1.0289);transform-origin:0 0;-webkit-text-stroke:0.3px #fff;">Spends</div>
<div class="t" style="left:71.57px;top:634.00px;font-size:26.43px;line-height:26px;font-weight:400;color:#ffffff;transform:scaleX(1.0719);transform-origin:0 0;-webkit-text-stroke:0.3px #fff;">Security</div>
<div class="t" style="left:72.70px;top:714.00px;font-size:26.43px;line-height:26px;font-weight:400;color:#ffffff;transform:scaleX(1.0089);transform-origin:0 0;-webkit-text-stroke:0.3px #fff;">Access Reviews</div>
<div class="t" style="left:70.42px;top:794.00px;font-size:26.43px;line-height:26px;font-weight:400;color:#ffffff;transform:scaleX(1.0766);transform-origin:0 0;-webkit-text-stroke:0.3px #fff;">Reports</div>
<div class="t" style="left:71.60px;top:874.00px;font-size:26.43px;line-height:26px;font-weight:400;color:#ffffff;transform:scaleX(1.0441);transform-origin:0 0;-webkit-text-stroke:0.3px #fff;">Sources</div>
<div class="t" style="left:86.30px;top:955.00px;font-size:25.29px;line-height:25px;font-weight:400;color:#ffffff;transform:scaleX(1.1180);transform-origin:0 0;-webkit-text-stroke:0.3px #fff;">Workflows</div>
<div class="t" style="left:71.68px;top:1034.00px;font-size:26.00px;line-height:26px;font-weight:400;color:#ffffff;transform:scaleX(1.0068);transform-origin:0 0;-webkit-text-stroke:0.3px #fff;">Tasks</div>
<div class="t" style="left:67.84px;top:1165.00px;font-size:22.86px;line-height:23px;font-weight:400;color:#d9e3fa;transform:scaleX(0.9384);transform-origin:0 0;">SETTINGS</div>
<div class="t" style="left:68.70px;top:1240.00px;font-size:23.00px;line-height:23px;font-weight:400;color:#d9e3fa;transform:scaleX(0.9469);transform-origin:0 0;">AUDIT LOGS</div>
<div class="t" style="left:67.59px;top:1315.00px;font-size:23.00px;line-height:23px;font-weight:400;color:#d9e3fa;transform:scaleX(0.9625);transform-origin:0 0;">CHAT WITH US</div>
<div class="t" style="left:67.02px;top:1389.00px;font-size:22.86px;line-height:23px;font-weight:400;color:#d9e3fa;transform:scaleX(0.9207);transform-origin:0 0;">HELP</div>
<div class="t" style="left:389.79px;top:295.00px;font-size:22.57px;line-height:23px;font-weight:700;color:#767676;transform:scaleX(0.9689);transform-origin:0 0;">MANAGED APPS</div>
<div class="t" style="left:824.58px;top:295.00px;font-size:22.86px;line-height:23px;font-weight:700;color:#767676;transform:scaleX(0.9095);transform-origin:0 0;">ACTIVE EMPLOYEES</div>
<div class="t" style="left:1259.28px;top:295.00px;font-size:22.86px;line-height:23px;font-weight:700;color:#767676;transform:scaleX(0.9207);transform-origin:0 0;">AVERAGE USAGE</div>
<div class="t" style="left:1693.59px;top:300.00px;font-size:22.57px;line-height:23px;font-weight:700;color:#767676;transform:scaleX(0.9435);transform-origin:0 0;">TOTAL SPEND</div>
<div class="t" style="left:2128.03px;top:295.00px;font-size:22.86px;line-height:23px;font-weight:700;color:#767676;transform:scaleX(0.9495);transform-origin:0 0;">CONTRACT RENEWALS</div>
<div class="t" style="left:396.56px;top:344.00px;font-size:52.86px;line-height:53px;font-weight:700;color:#2266E2;transform:scaleX(1.0956);transform-origin:0 0;">94</div>
<div class="t" style="left:832.58px;top:344.00px;font-size:52.86px;line-height:53px;font-weight:700;color:#2266E2;transform:scaleX(0.9597);transform-origin:0 0;">2518</div>
<div class="t" style="left:1266.72px;top:345.00px;font-size:53.57px;line-height:54px;font-weight:700;color:#2266E2;transform:scaleX(0.9858);transform-origin:0 0;">58%</div>
<div class="t" style="left:1701.69px;top:353.00px;font-size:52.57px;line-height:53px;font-weight:700;color:#2266E2;transform:scaleX(0.9679);transform-origin:0 0;">$3.17M</div>
<div class="t" style="left:2135.73px;top:344.00px;font-size:52.80px;line-height:53px;font-weight:700;color:#2266E2;transform:scaleX(1.1170);transform-origin:0 0;">6</div>
<div class="t" style="left:430.25px;top:418.00px;font-size:20.57px;line-height:21px;font-weight:700;color:#5bc85b;transform:scaleX(1.2103);transform-origin:0 0;">0</div>
<div class="t" style="left:452.36px;top:418.00px;font-size:20.57px;line-height:21px;font-weight:700;color:#6e6e6e;transform:scaleX(1.0071);transform-origin:0 0;">in Oct</div>
<div class="t" style="left:864.25px;top:418.00px;font-size:20.57px;line-height:21px;font-weight:700;color:#5bc85b;transform:scaleX(1.2103);transform-origin:0 0;">0</div>
<div class="t" style="left:887.26px;top:418.00px;font-size:20.57px;line-height:21px;font-weight:700;color:#6e6e6e;transform:scaleX(1.0071);transform-origin:0 0;">in Oct</div>
<div class="t" style="left:1297.93px;top:418.00px;font-size:20.57px;line-height:21px;font-weight:700;color:#5bc85b;transform:scaleX(0.8682);transform-origin:0 0;">1%</div>
<div class="t" style="left:1331.74px;top:418.00px;font-size:20.57px;line-height:21px;font-weight:700;color:#6e6e6e;transform:scaleX(1.0177);transform-origin:0 0;">in Oct</div>
<div class="t" style="left:1733.35px;top:429.00px;font-size:20.00px;line-height:20px;font-weight:700;color:#f2644f;transform:scaleX(1.0865);transform-origin:0 0;">-$184.03k</div>
<div class="t" style="left:1839.95px;top:429.00px;font-size:20.00px;line-height:20px;font-weight:700;color:#6e6e6e;transform:scaleX(1.0431);transform-origin:0 0;">in Oct</div>
<div class="t" style="left:2168.00px;top:418.00px;font-size:20.57px;line-height:21px;font-weight:700;color:#5bc85b;transform:scaleX(1.2153);transform-origin:0 0;">0</div>
<div class="t" style="left:2190.15px;top:418.00px;font-size:20.57px;line-height:21px;font-weight:700;color:#6e6e6e;transform:scaleX(1.0142);transform-origin:0 0;">in Oct</div>
<div class="t" style="left:383.75px;top:525.00px;font-size:21.71px;line-height:22px;font-weight:700;color:#7c7c7c;transform:scaleX(1.0422);transform-origin:0 0;">Authorization Status</div>
<div class="t" style="left:817.08px;top:525.00px;font-size:21.71px;line-height:22px;font-weight:700;color:#7c7c7c;transform:scaleX(1.0143);transform-origin:0 0;">User Types</div>
<div class="t" style="left:1251.55px;top:525.00px;font-size:21.71px;line-height:22px;font-weight:700;color:#7c7c7c;transform:scaleX(1.0358);transform-origin:0 0;">Managed apps with low usage</div>
<div class="t" style="left:1687.38px;top:525.00px;font-size:21.71px;line-height:22px;font-weight:700;color:#7c7c7c;transform:scaleX(1.0235);transform-origin:0 0;">Top Applications By Spend</div>
<div class="t" style="left:2120.94px;top:525.00px;font-size:21.71px;line-height:22px;font-weight:700;color:#7c7c7c;transform:scaleX(1.0433);transform-origin:0 0;">Upcoming Contract Renewals</div>
<div class="t" style="left:577.00px;top:283.00px;font-size:19.31px;line-height:19px;font-weight:700;color:#5f5f5f;transform:scaleX(1.3810);transform-origin:0 0;">i</div>
<div class="t" style="left:1044.60px;top:282.00px;font-size:20.69px;line-height:21px;font-weight:700;color:#5f5f5f;transform:scaleX(1.2889);transform-origin:0 0;">i</div>
<div class="t" style="left:1450.00px;top:287.00px;font-size:21.24px;line-height:21px;font-weight:700;color:#9a9a9a;transform:scaleX(1.2554);transform-origin:0 0;">i</div>
<div class="t" style="left:1850.40px;top:288.00px;font-size:21.24px;line-height:21px;font-weight:700;color:#5f5f5f;transform:scaleX(1.2554);transform-origin:0 0;">i</div>
<div class="t" style="left:2388.00px;top:282.00px;font-size:20.55px;line-height:21px;font-weight:700;color:#5f5f5f;transform:scaleX(1.2975);transform-origin:0 0;">i</div>
<div class="t" style="left:688.20px;top:891.00px;font-size:18.76px;line-height:19px;font-weight:700;color:#5f5f5f;transform:scaleX(1.4216);transform-origin:0 0;">i</div>
<div class="t" style="left:1403.90px;top:891.00px;font-size:18.76px;line-height:19px;font-weight:700;color:#5f5f5f;transform:scaleX(1.4216);transform-origin:0 0;">i</div>
<div class="t" style="left:2079.20px;top:891.00px;font-size:18.76px;line-height:19px;font-weight:700;color:#5f5f5f;transform:scaleX(1.4216);transform-origin:0 0;">i</div>
<div class="t" style="left:2463.00px;top:525.00px;font-size:21.93px;line-height:22px;font-weight:700;color:#6a6a6a;transform:scaleX(1.2159);transform-origin:0 0;">i</div>
<div class="t" style="left:1906.38px;top:303.00px;font-size:16.00px;line-height:16px;font-weight:700;color:#555555;transform:scaleX(1.0676);transform-origin:0 0;">FY 23-24</div>
<div class="t" style="left:910.79px;top:905.00px;font-size:16.57px;line-height:17px;font-weight:700;color:#555555;transform:scaleX(1.0203);transform-origin:0 0;">FY 23-24</div>
<div class="t" style="left:1636.79px;top:905.00px;font-size:16.57px;line-height:17px;font-weight:700;color:#555555;transform:scaleX(1.0174);transform-origin:0 0;">FY 23-24</div>
<div class="t" style="left:2365.49px;top:905.00px;font-size:16.57px;line-height:17px;font-weight:700;color:#555555;transform:scaleX(1.0159);transform-origin:0 0;">FY 23-24</div>
<div class="t" style="left:382.33px;top:577.00px;font-size:22.43px;line-height:22px;font-weight:400;color:#222222;transform:scaleX(1.0639);transform-origin:0 0;">Unmanaged</div>
<div class="t" style="left:687.71px;top:578.00px;font-size:21.86px;line-height:22px;font-weight:400;color:#222222;transform:scaleX(1.0854);transform-origin:0 0;">242</div>
<div class="t" style="left:382.00px;top:640.00px;font-size:22.43px;line-height:22px;font-weight:400;color:#222222;transform:scaleX(1.1143);transform-origin:0 0;">Restricted</div>
<div class="t" style="left:697.64px;top:641.00px;font-size:21.86px;line-height:22px;font-weight:400;color:#222222;transform:scaleX(1.2143);transform-origin:0 0;">90</div>
<div class="t" style="left:382.15px;top:703.00px;font-size:22.43px;line-height:22px;font-weight:400;color:#222222;transform:scaleX(1.0309);transform-origin:0 0;">Needs Review</div>
<div class="t" style="left:692.98px;top:704.00px;font-size:21.86px;line-height:22px;font-weight:400;color:#222222;transform:scaleX(0.9370);transform-origin:0 0;">781</div>
<div class="t" style="left:383.77px;top:766.00px;font-size:22.43px;line-height:22px;font-weight:700;color:#222222;transform:scaleX(1.0141);transform-origin:0 0;">Total Applications</div>
<div class="t" style="left:676.13px;top:767.00px;font-size:21.86px;line-height:22px;font-weight:700;color:#222222;transform:scaleX(1.0468);transform-origin:0 0;">1207</div>
<div class="t" style="left:817.18px;top:577.00px;font-size:22.43px;line-height:22px;font-weight:400;color:#222222;transform:scaleX(1.0910);transform-origin:0 0;">Group</div>
<div class="t" style="left:1127.96px;top:578.00px;font-size:21.86px;line-height:22px;font-weight:400;color:#222222;transform:scaleX(0.9439);transform-origin:0 0;">110</div>
<div class="t" style="left:817.44px;top:640.00px;font-size:22.43px;line-height:22px;font-weight:400;color:#222222;transform:scaleX(1.0714);transform-origin:0 0;">Service</div>
<div class="t" style="left:1135.68px;top:641.00px;font-size:21.86px;line-height:22px;font-weight:400;color:#222222;transform:scaleX(1.0478);transform-origin:0 0;">97</div>
<div class="t" style="left:816.51px;top:703.00px;font-size:22.43px;line-height:22px;font-weight:400;color:#222222;transform:scaleX(1.0558);transform-origin:0 0;">External</div>
<div class="t" style="left:1126.49px;top:704.00px;font-size:21.86px;line-height:22px;font-weight:400;color:#222222;transform:scaleX(0.9421);transform-origin:0 0;">416</div>
<div class="t" style="left:818.18px;top:766.00px;font-size:22.43px;line-height:22px;font-weight:700;color:#222222;transform:scaleX(0.9886);transform-origin:0 0;">Total Active Users</div>
<div class="t" style="left:1117.82px;top:767.00px;font-size:21.86px;line-height:22px;font-weight:700;color:#222222;transform:scaleX(0.8800);transform-origin:0 0;">3141</div>
<div class="t" style="left:1288.51px;top:580.00px;font-size:22.43px;line-height:22px;font-weight:400;color:#222222;transform:scaleX(1.0509);transform-origin:0 0;">Expensify</div>
<div class="t" style="left:1555.61px;top:578.00px;font-size:21.86px;line-height:22px;font-weight:400;color:#222222;transform:scaleX(0.9115);transform-origin:0 0;">14%</div>
<div class="t" style="left:1288.52px;top:643.00px;font-size:22.43px;line-height:22px;font-weight:400;color:#222222;transform:scaleX(1.0455);transform-origin:0 0;">Linear</div>
<div class="t" style="left:1555.61px;top:641.00px;font-size:21.86px;line-height:22px;font-weight:400;color:#222222;transform:scaleX(0.9115);transform-origin:0 0;">16%</div>
<div class="t" style="left:1288.56px;top:706.00px;font-size:22.43px;line-height:22px;font-weight:400;color:#222222;transform:scaleX(1.0280);transform-origin:0 0;">Figma</div>
<div class="t" style="left:1557.37px;top:704.00px;font-size:21.86px;line-height:22px;font-weight:400;color:#222222;transform:scaleX(0.8706);transform-origin:0 0;">17%</div>
<div class="t" style="left:1288.38px;top:768.00px;font-size:22.43px;line-height:22px;font-weight:400;color:#222222;transform:scaleX(1.1280);transform-origin:0 0;">Lattice</div>
<div class="t" style="left:1549.55px;top:767.00px;font-size:21.86px;line-height:22px;font-weight:400;color:#222222;transform:scaleX(1.0520);transform-origin:0 0;">20%</div>
<div class="t" style="left:1686.90px;top:580.00px;font-size:22.43px;line-height:22px;font-weight:400;color:#222222;transform:scaleX(1.0330);transform-origin:0 0;">Zendesk</div>
<div class="t" style="left:1977.96px;top:578.00px;font-size:21.86px;line-height:22px;font-weight:400;color:#222222;transform:scaleX(1.0781);transform-origin:0 0;">$94k</div>
<div class="t" style="left:1685.62px;top:643.00px;font-size:22.43px;line-height:22px;font-weight:400;color:#222222;transform:scaleX(1.1013);transform-origin:0 0;">Microsoft 365</div>
<div class="t" style="left:1976.36px;top:641.00px;font-size:21.86px;line-height:22px;font-weight:400;color:#222222;transform:scaleX(1.1119);transform-origin:0 0;">$90k</div>
<div class="t" style="left:1686.43px;top:706.00px;font-size:22.43px;line-height:22px;font-weight:400;color:#222222;transform:scaleX(1.0471);transform-origin:0 0;">Google Works...</div>
<div class="t" style="left:1959.77px;top:704.00px;font-size:21.86px;line-height:22px;font-weight:400;color:#222222;transform:scaleX(1.0560);transform-origin:0 0;">$88.9k</div>
<div class="t" style="left:1685.72px;top:768.00px;font-size:22.43px;line-height:22px;font-weight:400;color:#222222;transform:scaleX(1.0467);transform-origin:0 0;">Hibob HRIS</div>
<div class="t" style="left:1977.96px;top:767.00px;font-size:21.86px;line-height:22px;font-weight:400;color:#222222;transform:scaleX(1.0781);transform-origin:0 0;">$86k</div>
<div class="t" style="left:1261.26px;top:766.00px;font-size:17.14px;line-height:17px;font-weight:400;color:#555555;transform:scaleX(0.9074);transform-origin:0 0;">L</div>
<div class="t" style="left:2143.78px;top:638.00px;font-size:21.43px;line-height:21px;font-weight:400;color:#a3a3a3;transform:scaleX(1.1192);transform-origin:0 0;">No upcoming renewals in the</div>
<div class="t" style="left:2219.41px;top:670.00px;font-size:21.43px;line-height:21px;font-weight:400;color:#a3a3a3;transform:scaleX(1.1564);transform-origin:0 0;">current month.</div>
<div class="t" style="left:376.57px;top:904.00px;font-size:21.43px;line-height:21px;font-weight:700;color:#767676;">ACTUAL SPEND PER MONTH</div>
<div class="t" style="left:1104.79px;top:904.00px;font-size:21.43px;line-height:21px;font-weight:700;color:#767676;transform:scaleX(0.9656);transform-origin:0 0;">AVERAGE SPEND PER USER</div>
<div class="t" style="left:1830.43px;top:904.00px;font-size:21.43px;line-height:21px;font-weight:700;color:#767676;transform:scaleX(1.0130);transform-origin:0 0;">COST OF CONTRACTS</div>
<div class="t" style="left:383.56px;top:970.00px;font-size:41.43px;line-height:41px;font-weight:700;color:#2266E2;transform:scaleX(1.0555);transform-origin:0 0;">$98.62k</div>
<div class="t" style="left:778.50px;top:970.00px;font-size:41.43px;line-height:41px;font-weight:700;color:#2266E2;transform:scaleX(0.9774);transform-origin:0 0;">$3.17M</div>
<div class="t" style="left:1111.89px;top:970.00px;font-size:41.43px;line-height:41px;font-weight:700;color:#2266E2;transform:scaleX(0.9817);transform-origin:0 0;">$1.98</div>
<div class="t" style="left:1523.06px;top:970.00px;font-size:41.43px;line-height:41px;font-weight:700;color:#2266E2;transform:scaleX(1.0550);transform-origin:0 0;">$76.65</div>
<div class="t" style="left:1838.27px;top:970.00px;font-size:41.43px;line-height:41px;font-weight:700;color:#2266E2;transform:scaleX(1.0364);transform-origin:0 0;">$7.4M</div>
<div class="t" style="left:2281.26px;top:970.00px;font-size:41.43px;line-height:41px;font-weight:700;color:#2266E2;transform:scaleX(1.0714);transform-origin:0 0;">$89.39M</div>
<div class="t" style="left:384.00px;top:1032.00px;font-size:19.43px;line-height:19px;font-weight:400;color:#6e6a6e;transform:scaleX(1.0253);transform-origin:0 0;-webkit-text-stroke:0.45px #6e6a6e;">Actual Spend in Oct 2024</div>
<div class="t" style="left:778.90px;top:1032.00px;font-size:19.43px;line-height:19px;font-weight:400;color:#6e6a6e;transform:scaleX(0.9973);transform-origin:0 0;-webkit-text-stroke:0.45px #6e6a6e;">Actual Spend in FY 23-24</div>
<div class="t" style="left:1112.30px;top:1032.00px;font-size:19.43px;line-height:19px;font-weight:400;color:#6e6a6e;transform:scaleX(1.0129);transform-origin:0 0;-webkit-text-stroke:0.45px #6e6a6e;">Avg. Spend in Oct 2024</div>
<div class="t" style="left:1523.50px;top:1032.00px;font-size:19.43px;line-height:19px;font-weight:400;color:#6e6a6e;transform:scaleX(0.9823);transform-origin:0 0;-webkit-text-stroke:0.45px #6e6a6e;">Avg. Spend in FY 23-24</div>
<div class="t" style="left:1837.69px;top:1032.00px;font-size:19.43px;line-height:19px;font-weight:400;color:#6e6a6e;transform:scaleX(1.0368);transform-origin:0 0;-webkit-text-stroke:0.45px #6e6a6e;">Cost in Oct 2024</div>
<div class="t" style="left:2280.73px;top:1032.00px;font-size:19.43px;line-height:19px;font-weight:400;color:#6e6a6e;transform:scaleX(0.9951);transform-origin:0 0;-webkit-text-stroke:0.45px #6e6a6e;">Cost in FY 23-24</div>
<div class="t" style="left:373.73px;top:1352.00px;font-size:15.80px;line-height:16px;font-weight:400;color:#6b6b6b;transform:scaleX(1.1627);transform-origin:0 0;">Nov</div>
<div class="t" style="left:431.03px;top:1352.00px;font-size:15.80px;line-height:16px;font-weight:400;color:#6b6b6b;transform:scaleX(1.1351);transform-origin:0 0;">Dec</div>
<div class="t" style="left:490.41px;top:1352.00px;font-size:15.80px;line-height:16px;font-weight:400;color:#6b6b6b;transform:scaleX(1.1175);transform-origin:0 0;">Jan</div>
<div class="t" style="left:546.00px;top:1352.00px;font-size:15.80px;line-height:16px;font-weight:400;color:#6b6b6b;transform:scaleX(1.0713);transform-origin:0 0;">Feb</div>
<div class="t" style="left:602.13px;top:1352.00px;font-size:15.80px;line-height:16px;font-weight:400;color:#6b6b6b;transform:scaleX(1.0994);transform-origin:0 0;">Mar</div>
<div class="t" style="left:660.44px;top:1352.00px;font-size:15.80px;line-height:16px;font-weight:400;color:#6b6b6b;transform:scaleX(1.1443);transform-origin:0 0;">Apr</div>
<div class="t" style="left:714.56px;top:1352.00px;font-size:15.80px;line-height:16px;font-weight:400;color:#6b6b6b;transform:scaleX(1.0635);transform-origin:0 0;">May</div>
<div class="t" style="left:773.04px;top:1352.00px;font-size:15.80px;line-height:16px;font-weight:400;color:#6b6b6b;transform:scaleX(1.1953);transform-origin:0 0;">Jun</div>
<div class="t" style="left:832.85px;top:1352.00px;font-size:15.80px;line-height:16px;font-weight:400;color:#6b6b6b;transform:scaleX(1.2069);transform-origin:0 0;">Jul</div>
<div class="t" style="left:885.86px;top:1352.00px;font-size:15.80px;line-height:16px;font-weight:400;color:#6b6b6b;transform:scaleX(1.1313);transform-origin:0 0;">Aug</div>
<div class="t" style="left:942.28px;top:1352.00px;font-size:15.80px;line-height:16px;font-weight:400;color:#6b6b6b;transform:scaleX(1.1148);transform-origin:0 0;">Sep</div>
<div class="t" style="left:999.80px;top:1352.00px;font-size:15.80px;line-height:16px;font-weight:400;color:#6b6b6b;transform:scaleX(1.1801);transform-origin:0 0;">Oct</div>
<div class="t" style="left:1101.53px;top:1352.00px;font-size:15.80px;line-height:16px;font-weight:400;color:#6b6b6b;transform:scaleX(1.1627);transform-origin:0 0;">Nov</div>
<div class="t" style="left:1158.74px;top:1352.00px;font-size:15.80px;line-height:16px;font-weight:400;color:#6b6b6b;transform:scaleX(1.1351);transform-origin:0 0;">Dec</div>
<div class="t" style="left:1218.03px;top:1352.00px;font-size:15.80px;line-height:16px;font-weight:400;color:#6b6b6b;transform:scaleX(1.1175);transform-origin:0 0;">Jan</div>
<div class="t" style="left:1273.53px;top:1352.00px;font-size:15.80px;line-height:16px;font-weight:400;color:#6b6b6b;transform:scaleX(1.0713);transform-origin:0 0;">Feb</div>
<div class="t" style="left:1329.57px;top:1352.00px;font-size:15.80px;line-height:16px;font-weight:400;color:#6b6b6b;transform:scaleX(1.0994);transform-origin:0 0;">Mar</div>
<div class="t" style="left:1387.79px;top:1352.00px;font-size:15.80px;line-height:16px;font-weight:400;color:#6b6b6b;transform:scaleX(1.1443);transform-origin:0 0;">Apr</div>
<div class="t" style="left:1441.82px;top:1352.00px;font-size:15.80px;line-height:16px;font-weight:400;color:#6b6b6b;transform:scaleX(1.0635);transform-origin:0 0;">May</div>
<div class="t" style="left:1500.20px;top:1352.00px;font-size:15.80px;line-height:16px;font-weight:400;color:#6b6b6b;transform:scaleX(1.1953);transform-origin:0 0;">Jun</div>
<div class="t" style="left:1559.93px;top:1352.00px;font-size:15.80px;line-height:16px;font-weight:400;color:#6b6b6b;transform:scaleX(1.2069);transform-origin:0 0;">Jul</div>
<div class="t" style="left:1612.85px;top:1352.00px;font-size:15.80px;line-height:16px;font-weight:400;color:#6b6b6b;transform:scaleX(1.1313);transform-origin:0 0;">Aug</div>
<div class="t" style="left:1669.17px;top:1352.00px;font-size:15.80px;line-height:16px;font-weight:400;color:#6b6b6b;transform:scaleX(1.1148);transform-origin:0 0;">Sep</div>
<div class="t" style="left:1726.60px;top:1352.00px;font-size:15.80px;line-height:16px;font-weight:400;color:#6b6b6b;transform:scaleX(1.1801);transform-origin:0 0;">Oct</div>
<div class="t" style="left:1827.83px;top:1352.00px;font-size:15.80px;line-height:16px;font-weight:400;color:#6b6b6b;transform:scaleX(1.1627);transform-origin:0 0;">Nov</div>
<div class="t" style="left:1885.12px;top:1352.00px;font-size:15.80px;line-height:16px;font-weight:400;color:#6b6b6b;transform:scaleX(1.1351);transform-origin:0 0;">Dec</div>
<div class="t" style="left:1944.47px;top:1352.00px;font-size:15.80px;line-height:16px;font-weight:400;color:#6b6b6b;transform:scaleX(1.1175);transform-origin:0 0;">Jan</div>
<div class="t" style="left:2000.05px;top:1352.00px;font-size:15.80px;line-height:16px;font-weight:400;color:#6b6b6b;transform:scaleX(1.0713);transform-origin:0 0;">Feb</div>
<div class="t" style="left:2056.16px;top:1352.00px;font-size:15.80px;line-height:16px;font-weight:400;color:#6b6b6b;transform:scaleX(1.0994);transform-origin:0 0;">Mar</div>
<div class="t" style="left:2114.45px;top:1352.00px;font-size:15.80px;line-height:16px;font-weight:400;color:#6b6b6b;transform:scaleX(1.1443);transform-origin:0 0;">Apr</div>
<div class="t" style="left:2168.56px;top:1352.00px;font-size:15.80px;line-height:16px;font-weight:400;color:#6b6b6b;transform:scaleX(1.0635);transform-origin:0 0;">May</div>
<div class="t" style="left:2227.01px;top:1352.00px;font-size:15.80px;line-height:16px;font-weight:400;color:#6b6b6b;transform:scaleX(1.1953);transform-origin:0 0;">Jun</div>
<div class="t" style="left:2286.81px;top:1352.00px;font-size:15.80px;line-height:16px;font-weight:400;color:#6b6b6b;transform:scaleX(1.2069);transform-origin:0 0;">Jul</div>
<div class="t" style="left:2339.80px;top:1352.00px;font-size:15.80px;line-height:16px;font-weight:400;color:#6b6b6b;transform:scaleX(1.1313);transform-origin:0 0;">Aug</div>
<div class="t" style="left:2396.20px;top:1352.00px;font-size:15.80px;line-height:16px;font-weight:400;color:#6b6b6b;transform:scaleX(1.1148);transform-origin:0 0;">Sep</div>
<div class="t" style="left:2453.70px;top:1352.00px;font-size:15.80px;line-height:16px;font-weight:400;color:#6b6b6b;transform:scaleX(1.1801);transform-origin:0 0;">Oct</div>
<div class="t" style="left:2385.63px;top:48.00px;font-size:12.43px;line-height:12px;font-weight:400;color:#ffffff;transform:scaleX(1.1195);transform-origin:0 0;">10</div>
<div class="t" style="left:2450.57px;top:53.00px;font-size:18.00px;line-height:18px;font-weight:400;color:#ffffff;transform:scaleX(1.0134);transform-origin:0 0;">SM</div>
</body></html>
